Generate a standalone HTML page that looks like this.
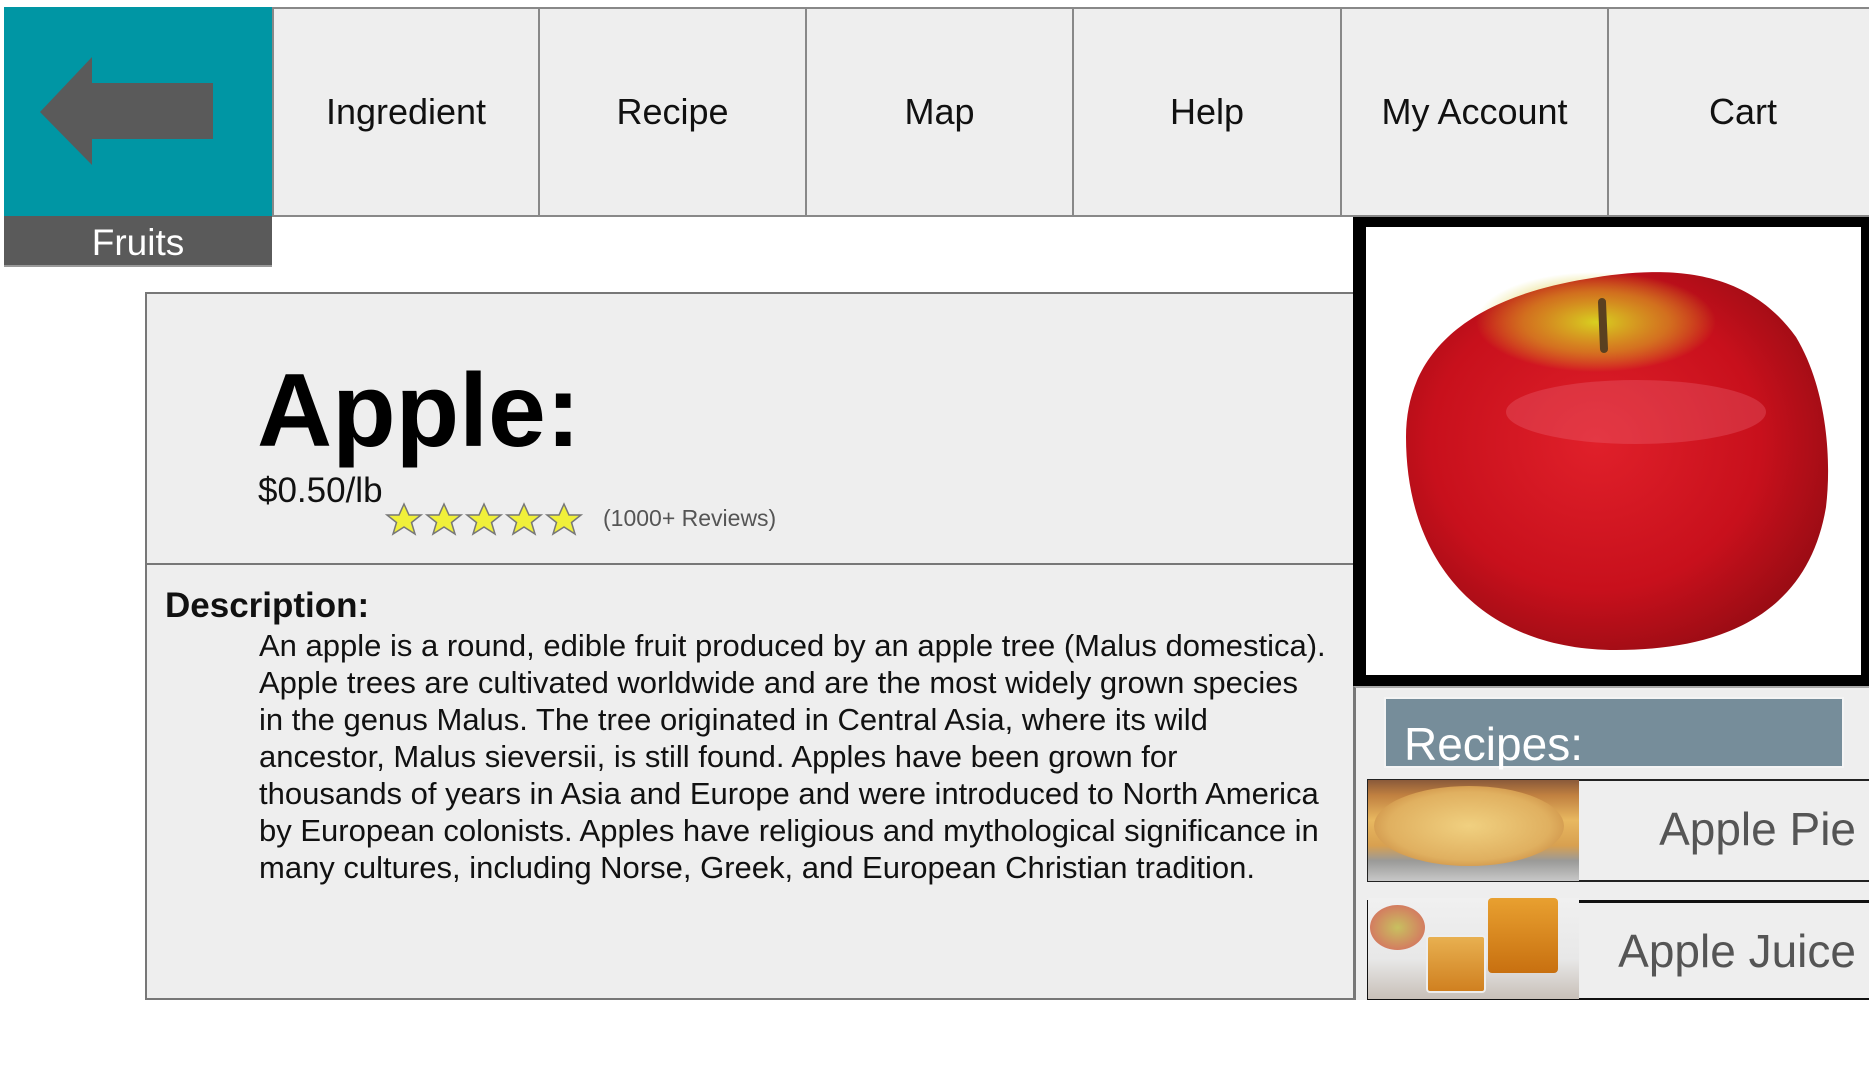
<!DOCTYPE html>
<html><head><meta charset="utf-8"><style>
*{margin:0;padding:0;box-sizing:border-box}
body{width:1869px;height:1079px;background:#fff;position:relative;overflow:hidden;font-family:"Liberation Sans",Arial,sans-serif}
.abs{position:absolute}
.nav{position:absolute;top:7px;height:210px;background:#eee;border-top:2px solid #888;border-bottom:2px solid #888;border-left:2px solid #888;display:flex;align-items:center;justify-content:center;font-size:36px;color:#111}
</style></head><body>
<div class="abs" style="left:4px;top:7px;width:268px;height:209px;background:#0096a4"></div>
<svg class="abs" style="left:4px;top:7px" width="268" height="209"><polygon points="36,105 88,50 88,76 209,76 209,132 88,132 88,158" fill="#5a5a5a"/></svg>
<div class="abs" style="left:4px;top:216px;width:268px;height:51px;background:#5a5a5a;color:#fff;font-size:37px;text-align:center;line-height:53px;border-bottom:2px solid #999">Fruits</div>
<div class="nav" style="left:272px;width:266px">Ingredient</div>
<div class="nav" style="left:538px;width:267px">Recipe</div>
<div class="nav" style="left:805px;width:267px">Map</div>
<div class="nav" style="left:1072px;width:268px">Help</div>
<div class="nav" style="left:1340px;width:267px">My Account</div>
<div class="nav" style="left:1607px;width:270px">Cart</div>

<div class="abs" style="left:145px;top:292px;width:1210px;height:708px;background:#eee;border:2px solid #777"></div>
<div class="abs" style="left:145px;top:563px;width:1210px;height:2px;background:#777"></div>
<div class="abs" style="left:257px;top:359px;font-size:104px;font-weight:bold;color:#000;line-height:1">Apple:</div>
<div class="abs" style="left:258px;top:471px;font-size:35px;color:#111">$0.50/lb</div>
<svg class="abs" style="left:384px;top:502px" width="202" height="34">
<g fill="#f0f03a" stroke="#777" stroke-width="1.5">
<polygon id="s" points="20,2 25,13 37,13 27.5,20.5 31,32 20,25 9,32 12.5,20.5 3,13 15,13"/>
<use href="#s" x="40"/><use href="#s" x="80"/><use href="#s" x="120"/><use href="#s" x="160"/></g></svg>
<div class="abs" style="left:603px;top:505px;font-size:23px;color:#555">(1000+ Reviews)</div>
<div class="abs" style="left:165px;top:586px;font-size:35px;font-weight:bold;color:#111">Description:</div>
<div class="abs" style="left:259px;top:627px;width:1100px;font-size:31px;line-height:37px;color:#111;white-space:nowrap">An apple is a round, edible fruit produced by an apple tree (Malus domestica).<br>Apple trees are cultivated worldwide and are the most widely grown species<br>in the genus Malus. The tree originated in Central Asia, where its wild<br>ancestor, Malus sieversii, is still found. Apples have been grown for<br>thousands of years in Asia and Europe and were introduced to North America<br>by European colonists. Apples have religious and mythological significance in<br>many cultures, including Norse, Greek, and European Christian tradition.</div>

<div class="abs" style="left:1353px;top:217px;width:520px;height:469px;background:#000"></div>
<div class="abs" style="left:1366px;top:227px;width:495px;height:448px;background:#fff"></div>
<svg class="abs" style="left:1366px;top:227px" width="495" height="448">
<defs>
<radialGradient id="ag" cx="0.45" cy="0.45" r="0.6"><stop offset="0" stop-color="#e0202a"/><stop offset="0.65" stop-color="#c8101c"/><stop offset="1" stop-color="#9a0c14"/></radialGradient>
<radialGradient id="yg" cx="0.5" cy="0.5" r="0.5"><stop offset="0" stop-color="#d8d020"/><stop offset="0.6" stop-color="#d8b020" stop-opacity="0.6"/><stop offset="1" stop-color="#d8d020" stop-opacity="0"/></radialGradient>
</defs>
<path d="M40,210 C40,120 110,70 220,52 C300,38 380,40 430,110 C460,160 466,230 460,280 C445,370 380,423 250,423 C120,423 40,340 40,210Z" fill="url(#ag)"/>
<ellipse cx="230" cy="95" rx="120" ry="50" fill="url(#yg)"/>
<ellipse cx="270" cy="185" rx="130" ry="32" fill="#f07080" opacity="0.3"/>
<path d="M236,75 L238,122" stroke="#5a4020" stroke-width="8" stroke-linecap="round"/>
</svg>

<div class="abs" style="left:1353px;top:686px;width:520px;height:314px;background:#eee;border-left:3px solid #777;border-top:2px solid #aaa"></div>
<div class="abs" style="left:1384px;top:697px;width:460px;height:71px;background:#768d9a;border:2px solid #f4f4f4;color:#fff;font-size:46px;padding:22px 0 0 18px;line-height:1">Recipes:</div>
<div class="abs" style="left:1367px;top:779px;width:505px;height:103px;border:2px solid #222;background:#eee"></div>
<div class="abs" style="left:1368px;top:780px;width:211px;height:101px;background:linear-gradient(180deg,#8a5a3a 0%,#c08040 15%,#e8b860 40%,#d8a050 65%,#9a9a98 80%,#c8c8c8 100%)"></div>
<div class="abs" style="left:1374px;top:786px;width:190px;height:80px;border-radius:50%;background:radial-gradient(#f0d080,#e0b060 60%,#c88840 85%,#888 100%)"></div>
<div class="abs" style="left:1590px;top:802px;width:266px;text-align:right;font-size:46px;color:#555">Apple Pie</div>
<div class="abs" style="left:1367px;top:900px;width:505px;height:100px;border:2px solid #111;border-top-width:3px;background:#eee"></div>
<div class="abs" style="left:1368px;top:898px;width:211px;height:101px;background:linear-gradient(180deg,#f0f0f0 0%,#e8e8e8 60%,#c8c0b8 100%)"></div>
<div class="abs" style="left:1370px;top:905px;width:55px;height:45px;border-radius:50%;background:radial-gradient(#c8c060,#d86060)"></div>
<div class="abs" style="left:1488px;top:898px;width:70px;height:75px;background:linear-gradient(#e8a030,#c87010);border-radius:4px"></div>
<div class="abs" style="left:1426px;top:935px;width:60px;height:58px;background:linear-gradient(#e8b050,#d08020);border-radius:4px;border:2px solid #eee"></div>
<div class="abs" style="left:1580px;top:924px;width:276px;text-align:right;font-size:46px;color:#555">Apple Juice</div>
</body></html>
